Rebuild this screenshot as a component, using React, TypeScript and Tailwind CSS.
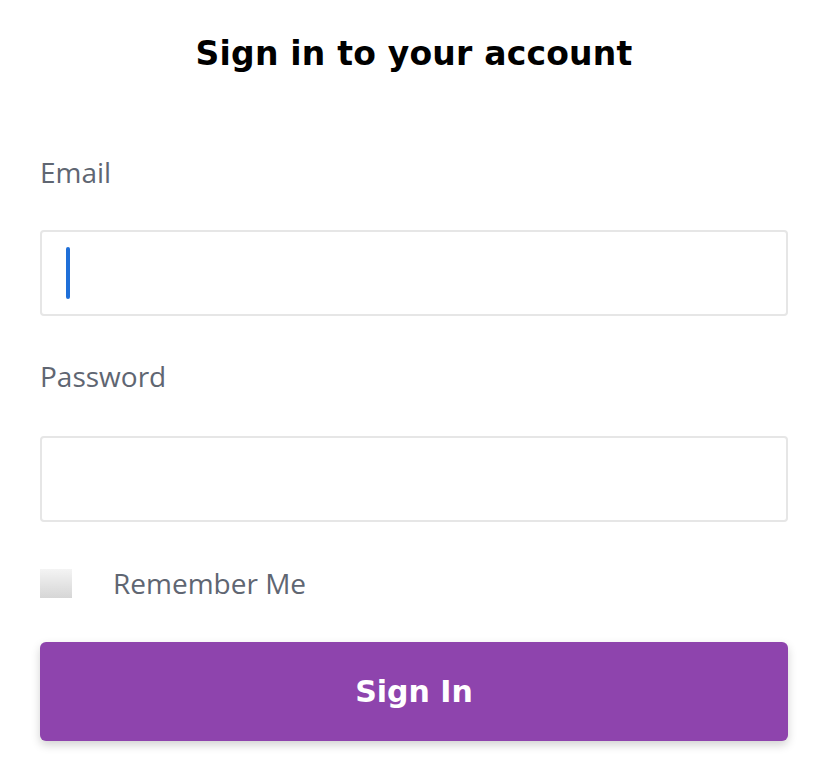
export default function App() {
  return (
    <div className="w-[828px] h-[776px] bg-white px-[40px] overflow-hidden" style={{ fontFamily: '"Open Sans", sans-serif' }}>
      <h1
        className="pt-[31px] text-center text-[33px] leading-[46px] font-bold text-black tracking-[0.2px]"
        style={{ fontFamily: '"DejaVu Sans", sans-serif' }}
      >
        Sign in to your account
      </h1>
      <div className="mt-[77px] text-[28px] leading-[36px] text-[#5f6672]">Email</div>
      <div className="mt-[40px] h-[86px] rounded-[4px] border-2 border-[#e6e6e6] flex items-center pl-[24px]">
        <div className="w-[4px] h-[52px] rounded-full bg-[#1f6fd8]" />
      </div>
      <div className="mt-[42px] text-[28px] leading-[36px] text-[#5f6672]">Password</div>
      <div className="mt-[42px] h-[86px] rounded-[4px] border-2 border-[#e6e6e6]" />
      <div className="mt-[43px] flex items-center">
        <div className="w-[32px] h-[29px] bg-gradient-to-b from-[#f4f4f4] to-[#d6d6d6]" />
        <span className="ml-[41px] text-[28px] leading-[36px] text-[#5f6672]">Remember Me</span>
      </div>
      <button
        className="mt-[41px] w-full h-[99px] rounded-[6px] bg-[#8e44ad] text-white text-[30px] font-bold shadow-[0_4px_10px_rgba(0,0,0,0.18)]"
        style={{ fontFamily: '"DejaVu Sans", sans-serif' }}
      >
        Sign In
      </button>
    </div>
  );
}
